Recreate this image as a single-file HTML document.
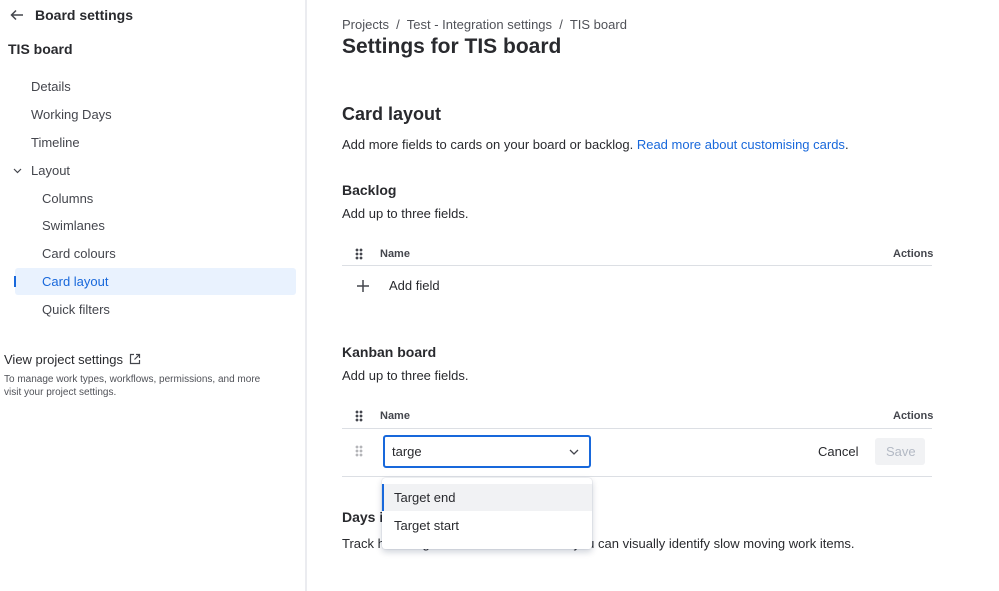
<!DOCTYPE html>
<html><head><meta charset="utf-8"><style>
*{margin:0;padding:0;box-sizing:border-box}
body{width:999px;height:591px;overflow:hidden;background:#fff;font-family:"Liberation Sans",sans-serif;color:#292a2e;position:relative}
.a{position:absolute;white-space:nowrap}
.side{position:absolute;left:0;top:0;width:307px;height:591px;border-right:2px solid #ebecf0}
.it{font-size:13px;color:#44464d}
.b{font-weight:bold}
.h3{font-size:14px;font-weight:bold;color:#292a2e}
.t13{font-size:13px;color:#292a2e}
.th{font-size:11px;font-weight:bold;color:#44464d}
.line{position:absolute;height:1px;background:#dcdfe4}
.dots{position:absolute;width:8px;height:12px;background-image:radial-gradient(circle,#44464d 1.3px,transparent 1.5px);background-size:4px 4px}
</style></head><body>
<div class="side">
<svg class="a" style="left:10px;top:9px" width="14" height="12" viewBox="0 0 14 12"><path d="M13 6H2M6 1.5L1.5 6L6 10.5" fill="none" stroke="#44464d" stroke-width="1.5"/></svg>
<div class="a b" style="left:35px;top:7px;font-size:14px">Board settings</div>
<div class="a b" style="left:8px;top:41px;font-size:14px">TIS board</div>
<div class="a it" style="left:31px;top:79px">Details</div>
<div class="a it" style="left:31px;top:107px">Working Days</div>
<div class="a it" style="left:31px;top:135px">Timeline</div>
<svg class="a" style="left:13px;top:168px" width="9" height="6" viewBox="0 0 9 6"><path d="M1 1L4.5 4.5L8 1" fill="none" stroke="#44464d" stroke-width="1.2"/></svg>
<div class="a it" style="left:31px;top:163px">Layout</div>
<div class="a it" style="left:42px;top:191px">Columns</div>
<div class="a it" style="left:42px;top:218px">Swimlanes</div>
<div class="a it" style="left:42px;top:246px">Card colours</div>
<div class="a" style="left:15px;top:268px;width:281px;height:27px;background:#e9f2fe;border-radius:3px"></div>
<div class="a" style="left:14px;top:276px;width:2px;height:11px;background:#1868db"></div>
<div class="a it" style="left:42px;top:274px;color:#1868db">Card layout</div>
<div class="a it" style="left:42px;top:302px">Quick filters</div>
<div class="a" style="left:4px;top:352px;font-size:13px;color:#292a2e">View project settings</div>
<svg class="a" style="left:129px;top:353px" width="12" height="12" viewBox="0 0 12 12"><path d="M5 1.5H1.5V10.5H10.5V7M7 1.5H10.5V5M10.5 1.5L5.5 6.5" fill="none" stroke="#44464d" stroke-width="1.2"/></svg>
<div class="a" style="left:4px;top:373px;font-size:10px;color:#505258;line-height:13px">To manage work types, workflows, permissions, and more<br>visit your project settings.</div>
</div>
<div class="a" style="left:342px;top:17px;font-size:13px;color:#505258">Projects &nbsp;/&nbsp; Test - Integration settings &nbsp;/&nbsp; TIS board</div>
<div class="a b" style="left:342px;top:35px;font-size:21px">Settings for TIS board</div>
<div class="a b" style="left:342px;top:104px;font-size:18px">Card layout</div>
<div class="a t13" style="left:342px;top:137px">Add more fields to cards on your board or backlog. <span style="color:#1868db">Read more about customising cards</span>.</div>
<div class="a h3" style="left:342px;top:182px">Backlog</div>
<div class="a t13" style="left:342px;top:206px">Add up to three fields.</div>
<div class="dots" style="left:355px;top:248px"></div>
<div class="a th" style="left:380px;top:248px">Name</div>
<div class="a th" style="left:893px;top:248px">Actions</div>
<div class="line" style="left:342px;top:265px;width:590px"></div>
<svg class="a" style="left:356px;top:279px" width="14" height="14" viewBox="0 0 14 14"><path d="M7 1V13M1 7H13" stroke="#44464d" stroke-width="1.5"/></svg>
<div class="a t13" style="left:389px;top:278px">Add field</div>
<div class="a h3" style="left:342px;top:344px">Kanban board</div>
<div class="a t13" style="left:342px;top:368px">Add up to three fields.</div>
<div class="dots" style="left:355px;top:410px"></div>
<div class="a th" style="left:380px;top:410px">Name</div>
<div class="a th" style="left:893px;top:410px">Actions</div>
<div class="line" style="left:342px;top:428px;width:590px"></div>
<div class="dots" style="left:355px;top:445px;opacity:.4"></div>
<div class="a" style="left:383px;top:435px;width:208px;height:33px;border:2px solid #1868db;border-radius:3px"></div>
<div class="a t13" style="left:392px;top:444px">targe</div>
<svg class="a" style="left:569px;top:449px" width="10" height="6" viewBox="0 0 10 6"><path d="M1 1L5 5L9 1" fill="none" stroke="#44464d" stroke-width="1.3"/></svg>
<div class="a t13" style="left:818px;top:444px">Cancel</div>
<div class="a" style="left:875px;top:438px;width:50px;height:27px;background:#f1f2f4;border-radius:3px"></div>
<div class="a" style="left:886px;top:444px;font-size:13px;color:#b3b9c4">Save</div>
<div class="line" style="left:342px;top:476px;width:590px"></div>
<div class="a h3" style="left:342px;top:509px">Days in column</div>
<div class="a t13" style="left:342px;top:536px">Track how long a card is in a column so you can visually identify slow moving work items.</div>
<div class="a" style="left:382px;top:478px;width:210px;height:71px;background:#fff;border-radius:3px;box-shadow:0 3px 7px rgba(9,30,66,.2),0 0 1px rgba(9,30,66,.3)"></div>
<div class="a" style="left:382px;top:484px;width:210px;height:27px;background:#f1f2f4"></div>
<div class="a" style="left:382px;top:484px;width:2px;height:27px;background:#1868db"></div>
<div class="a t13" style="left:394px;top:490px">Target end</div>
<div class="a t13" style="left:394px;top:518px">Target start</div>
</body></html>
